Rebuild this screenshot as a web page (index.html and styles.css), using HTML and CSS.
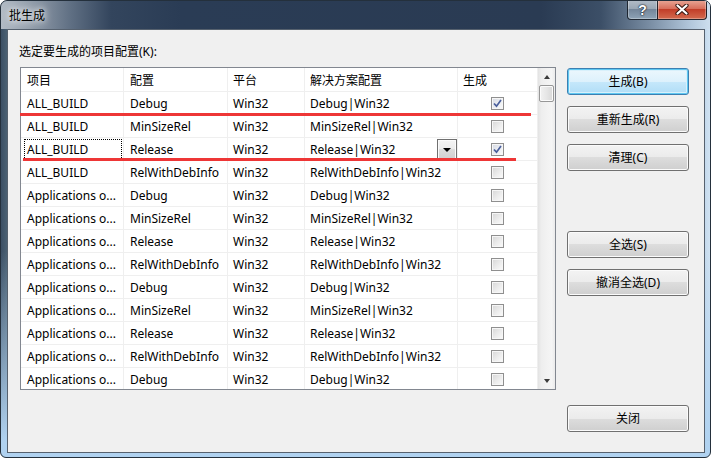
FILE: index.html
```html
<!DOCTYPE html>
<html lang="zh-CN">
<head>
<meta charset="utf-8">
<title>批生成</title>
<link rel="stylesheet" href="styles.css">
</head>
<body>
<div class="window">
  <div class="titlebar">
    <span class="title">批生成</span>
    <div class="caption">
      <div class="cbtn help"><span class="q">?</span></div>
      <div class="cbtn close">
        <svg width="14" height="11" viewBox="0 0 14 11"><path d="M2.5 1.5 L11.5 9.5 M11.5 1.5 L2.5 9.5" stroke="#3a1a14" stroke-width="4.2" stroke-linecap="round"/><path d="M2.5 1.5 L11.5 9.5 M11.5 1.5 L2.5 9.5" stroke="#ffffff" stroke-width="2.2" stroke-linecap="round"/></svg>
      </div>
    </div>
  </div>
  <div class="panel">
    <div class="label">选定要生成的项目配置(K):</div>
    <div class="body">
      <div class="list">
        <div class="grid">
          <div class="row head"><div class="cell">项目</div><div class="cell">配置</div><div class="cell">平台</div><div class="cell">解决方案配置</div><div class="cell">生成</div></div>
          <div class="row"><div class="cell">ALL_BUILD</div><div class="cell">Debug</div><div class="cell">Win32</div><div class="cell">Debug|Win32</div><div class="cell chk"><span class="cb on"><svg width="11" height="11" viewBox="0 0 11 11"><path d="M2 5.5 L4.5 8.2 L9 2" fill="none" stroke="#4a5f9c" stroke-width="1.7"/></svg></span></div></div>
          <div class="row"><div class="cell">ALL_BUILD</div><div class="cell">MinSizeRel</div><div class="cell">Win32</div><div class="cell">MinSizeRel|Win32</div><div class="cell chk"><span class="cb"></span></div></div>
          <div class="row"><div class="cell focus">ALL_BUILD</div><div class="cell">Release</div><div class="cell">Win32</div><div class="cell">Release|Win32<span class="drop"><span class="tri"></span></span></div><div class="cell chk"><span class="cb on"><svg width="11" height="11" viewBox="0 0 11 11"><path d="M2 5.5 L4.5 8.2 L9 2" fill="none" stroke="#4a5f9c" stroke-width="1.7"/></svg></span></div></div>
          <div class="row"><div class="cell">ALL_BUILD</div><div class="cell">RelWithDebInfo</div><div class="cell">Win32</div><div class="cell">RelWithDebInfo|Win32</div><div class="cell chk"><span class="cb"></span></div></div>
          <div class="row"><div class="cell">Applications o...</div><div class="cell">Debug</div><div class="cell">Win32</div><div class="cell">Debug|Win32</div><div class="cell chk"><span class="cb"></span></div></div>
          <div class="row"><div class="cell">Applications o...</div><div class="cell">MinSizeRel</div><div class="cell">Win32</div><div class="cell">MinSizeRel|Win32</div><div class="cell chk"><span class="cb"></span></div></div>
          <div class="row"><div class="cell">Applications o...</div><div class="cell">Release</div><div class="cell">Win32</div><div class="cell">Release|Win32</div><div class="cell chk"><span class="cb"></span></div></div>
          <div class="row"><div class="cell">Applications o...</div><div class="cell">RelWithDebInfo</div><div class="cell">Win32</div><div class="cell">RelWithDebInfo|Win32</div><div class="cell chk"><span class="cb"></span></div></div>
          <div class="row"><div class="cell">Applications o...</div><div class="cell">Debug</div><div class="cell">Win32</div><div class="cell">Debug|Win32</div><div class="cell chk"><span class="cb"></span></div></div>
          <div class="row"><div class="cell">Applications o...</div><div class="cell">MinSizeRel</div><div class="cell">Win32</div><div class="cell">MinSizeRel|Win32</div><div class="cell chk"><span class="cb"></span></div></div>
          <div class="row"><div class="cell">Applications o...</div><div class="cell">Release</div><div class="cell">Win32</div><div class="cell">Release|Win32</div><div class="cell chk"><span class="cb"></span></div></div>
          <div class="row"><div class="cell">Applications o...</div><div class="cell">RelWithDebInfo</div><div class="cell">Win32</div><div class="cell">RelWithDebInfo|Win32</div><div class="cell chk"><span class="cb"></span></div></div>
          <div class="row"><div class="cell">Applications o...</div><div class="cell">Debug</div><div class="cell">Win32</div><div class="cell">Debug|Win32</div><div class="cell chk"><span class="cb"></span></div></div>
        </div>
        <div class="scroll">
          <div class="arrow"><span class="up"></span></div>
          <div class="thumb"></div>
          <div class="track"></div>
          <div class="arrow"><span class="down"></span></div>
        </div>
        <div class="redline r1"></div>
        <div class="redline r2"></div>
      </div>
      <div class="buttons">
        <div class="btn default">生成(B)</div>
        <div class="btn">重新生成(R)</div>
        <div class="btn">清理(C)</div>
        <div class="btn sep">全选(S)</div>
        <div class="btn">撤消全选(D)</div>
        <div class="btn last">关闭</div>
      </div>
    </div>
  </div>
</div>
</body>
</html>
```
FILE: styles.css
```css
* { box-sizing: border-box; }
html, body { margin: 0; padding: 0; background: #ffffff; }
body {
  font-family: "Noto Sans", "Noto Sans CJK SC", sans-serif;
  font-size: 12px;
  color: #000;
}
.window {
  width: 711px;
  height: 458px;
  border: 1px solid #24303c;
  border-radius: 7px 7px 6px 6px;
  overflow: hidden;
  display: flex;
  flex-direction: column;
  background:
    linear-gradient(180deg, rgba(168, 204, 236, 0) 250px, rgba(176, 210, 240, 1) 440px),
    linear-gradient(90deg, #3c4f64 0, #4f6677 8px, #6d8499 620px, #b9d0e6 700px, #d6e7f5 711px);
}
.titlebar {
  height: 28px;
  display: flex;
  justify-content: space-between;
  align-items: flex-start;
  background: linear-gradient(90deg, #b2bbc5 0, #939eab 30px, #5f6f83 70px, #33455d 110px, #2a3c55 180px, #2a3b53 540px, #3c4f67 600px, #7b8fa5 650px, #b3c8dc 690px, #d0e1f0 711px);
}
.title {
  margin: 7px 0 0 8px;
  line-height: 16px;
  font-size: 12px;
  color: #000;
  text-shadow: 0 0 6px #fff, 0 0 10px rgba(255, 255, 255, 0.9);
}
.caption {
  display: flex;
  margin: -1px 3px 0 0;
}
.cbtn {
  height: 20px;
  border: 1px solid rgba(18, 26, 36, 0.9);
  border-top: none;
  display: flex;
  align-items: center;
  justify-content: center;
  box-shadow: inset 0 0 0 1px rgba(255, 255, 255, 0.3);
}
.help {
  width: 30px;
  border-right: none;
  border-radius: 0 0 0 4px;
  background: linear-gradient(180deg, #b3bdc8 0, #9aa7b5 45%, #74869a 50%, #8ea3b6 100%);
}
.q {
  font-family: "Liberation Sans", sans-serif;
  font-weight: bold;
  font-size: 14px;
  line-height: 14px;
  color: #fff;
  text-shadow: 0 0 1px #1c2430, 0 0 1px #1c2430, 0 0 2px #1c2430;
}
.close {
  width: 50px;
  border-radius: 0 0 4px 0;
  background: linear-gradient(180deg, #e9a898 0, #d86f5c 45%, #c23e29 50%, #d36a4f 100%);
}
.close svg { display: block; }

.panel {
  margin-left: 6px;
  width: 698px;
  height: 424px;
  border: 1px solid #56616e;
  background: #f0f0f0;
  padding: 14px 0 0 12px;
}
.label {
  line-height: 16px;
  margin: 0 0 7px -1px;
}
.body {
  display: flex;
  align-items: flex-start;
}
.list {
  position: relative;
  width: 536px;
  height: 323px;
  border: 1px solid #828790;
  background: #fff;
  display: flex;
}
.grid {
  width: 517px;
  height: 321px;
  overflow: hidden;
}
.row {
  display: grid;
  grid-template-columns: 103px 104px 77px 153px 80px;
  height: 23px;
}
.row.head { height: 24px; }
.cell {
  position: relative;
  display: flex;
  align-items: center;
  white-space: nowrap;
  overflow: hidden;
  padding-left: 6px;
  border-right: 1px solid #efefef;
  border-bottom: 1px solid #efefef;
}
.cell:nth-child(3), .cell:nth-child(4) { padding-left: 5px; }
.cell.chk { justify-content: center; padding-left: 0; }
.head .cell:nth-child(5) { justify-content: flex-start; padding-left: 5px; }
.cell.focus::after {
  content: "";
  position: absolute;
  left: 3px;
  right: 1px;
  top: 1px;
  bottom: 0px;
  border: 1px dotted #000;
}
.drop {
  margin-left: auto;
  align-self: flex-start;
  margin-top: 1px;
  width: 20px;
  height: 21px;
  border: 1px solid #707070;
  background: linear-gradient(180deg, #f4f4f4 0, #ebebeb 50%, #dcdcdc 50%, #d0d0d0 100%);
  box-shadow: inset 0 0 0 1px #fbfbfb;
  display: flex;
  align-items: center;
  justify-content: center;
}
.tri {
  width: 0;
  height: 0;
  border-left: 4px solid transparent;
  border-right: 4px solid transparent;
  border-top: 4px solid #000;
}
.cb {
  width: 13px;
  height: 13px;
  border: 1px solid #8f8f8f;
  background: linear-gradient(135deg, #d6d6d6 0, #ececec 55%, #fbfbfb 100%);
  box-shadow: inset 0 0 0 1px #f6f6f6;
  display: flex;
  align-items: center;
  justify-content: center;
}
.cb.on {
  background: linear-gradient(135deg, #d4d8e2 0, #eceef2 55%, #fbfbfb 100%);
}
.cb svg { display: block; }

.scroll {
  width: 17px;
  height: 321px;
  display: flex;
  flex-direction: column;
  background: linear-gradient(90deg, #e3e3e3 0, #eeeeee 20%, #f5f5f5 80%, #ebebeb 100%);
}
.arrow {
  height: 17px;
  display: flex;
  align-items: center;
  justify-content: center;
}
.up, .down {
  width: 0;
  height: 0;
  border-left: 3.5px solid transparent;
  border-right: 3.5px solid transparent;
}
.up { border-bottom: 4px solid #3a3a3a; }
.down { border-top: 4px solid #3a3a3a; }
.thumb {
  margin: 0 1px;
  height: 17px;
  border: 1px solid #979797;
  border-radius: 2px;
  background: linear-gradient(90deg, #f2f2f2 0, #e6e6e6 50%, #d8d8d8 100%);
  box-shadow: inset 0 0 0 1px #fbfbfb;
}
.track { flex: 1; }
.redline {
  position: absolute;
  height: 3px;
  background: #ee3636;
}
.r1 { left: -1px; top: 45px; width: 511px; }
.r2 { left: 2px; top: 90px; width: 493px; }

.buttons {
  margin-left: 11px;
  width: 122px;
  padding-top: 1px;
  display: flex;
  flex-direction: column;
}
.btn {
  height: 27px;
  border: 1px solid #707070;
  border-radius: 3px;
  background: linear-gradient(180deg, #f3f3f3 0, #ebebeb 50%, #dddddd 50%, #cfcfcf 100%);
  box-shadow: inset 0 0 0 1px #fbfbfb;
  display: flex;
  align-items: center;
  justify-content: center;
  line-height: 16px;
}
.btn + .btn { margin-top: 11px; }
.btn.sep { margin-top: 60px; }
.btn.last { margin-top: 109px; }
.btn.default {
  border-color: #3c7fb1;
  background: linear-gradient(180deg, #ecf7fd 0, #ddf1fc 50%, #c6e8fb 50%, #b0ddf6 100%);
  box-shadow: inset 0 0 0 1px #5fc8f2, inset 0 0 0 2px #d8f0fb;
}
```
